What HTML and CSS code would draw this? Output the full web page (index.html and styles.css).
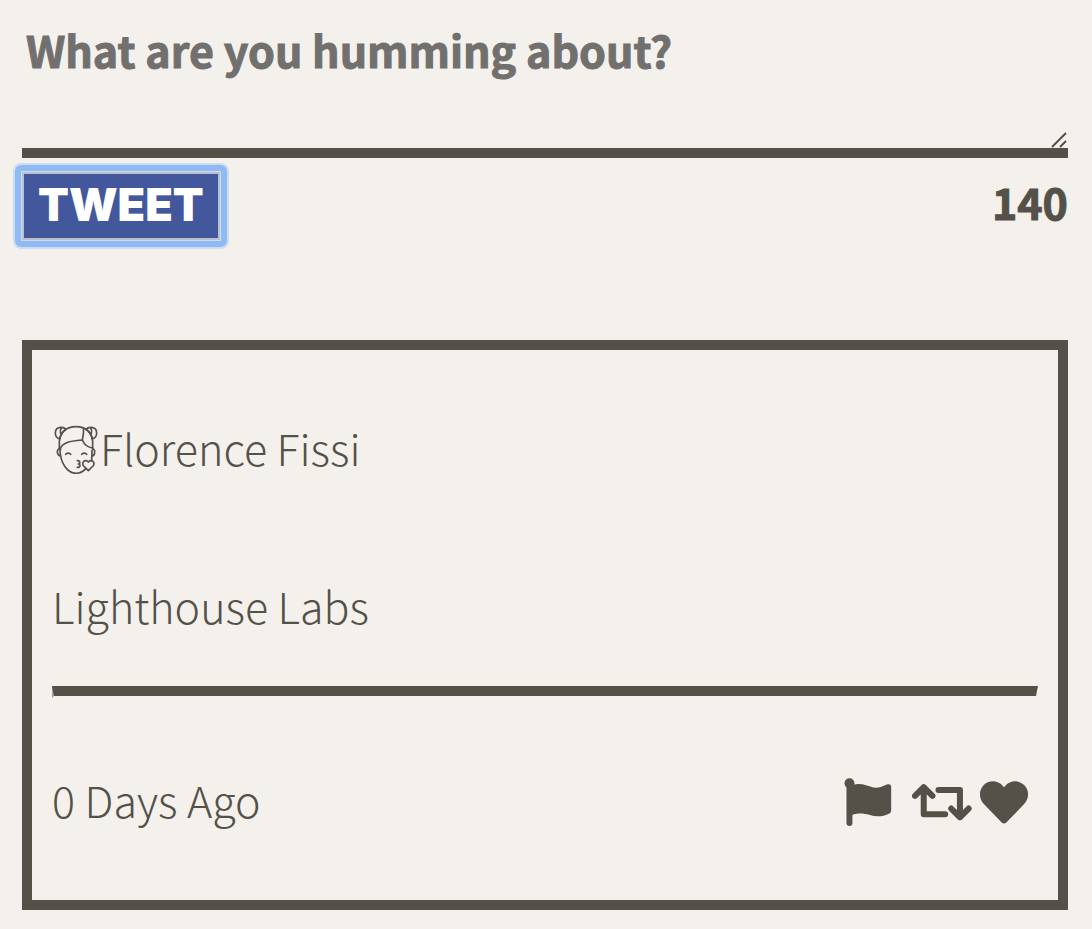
FILE: index.html
```html
<!DOCTYPE html>
<html lang="en">
<head>
<meta charset="utf-8">
<meta name="viewport" content="width=device-width, initial-scale=1">
<title>Tweeter</title>
<link rel="stylesheet" href="styles.css">
</head>
<body>
<main class="page">
  <form class="composer">
    <div class="field">
      <textarea class="message" aria-label="Tweet text" placeholder="What are you humming about?"></textarea>
      <svg class="grip" viewBox="0 0 16 16" aria-hidden="true"><path d="M1 15 15 1M9 15l6-6"/></svg>
    </div>
    <div class="actions">
      <button class="submit" type="button">TWEET</button>
      <output class="counter">140</output>
    </div>
  </form>
  <article class="tweet">
    <header class="author">
      <svg class="avatar" viewBox="42 45 132 147" aria-hidden="true">
        <path d="M58 117V94C60 66 80 50 108 50s48 16 50 44v23"/>
        <path d="M61 120c0-19 30-28 66-30 5 12 15 22 31 24"/>
        <path d="M131 54c0 12-1 24-4 36"/>
        <path d="M60 86c-10 0-14-9-14-17 0-11 7-17 17-17 7 0 12 2 15 6M60 84c3-12 9-20 18-26M65 52c-5 8-6 14-1 22"/>
        <path d="M156 86c10 0 14-9 14-17 0-11-7-17-17-17-7 0-12 2-15 6M156 84c-3-12-9-20-18-26M151 52c5 8 6 14 1 22"/>
        <path d="M58 117c-9 0-8 20 4 21M158 117c9 0 8 20-2 21"/>
        <path d="M60 121c1 38 22 69 48 69 12 0 22-6 30-15M156 121c0 9 0 15-1 28"/>
        <path d="M77 133c3-5 12-5 15 0M125 133c3-5 12-5 15 0"/>
        <path d="M112 152c9-1 10 9 3 10 8 1 6 12-3 10"/>
        <path d="M145 182 131 168c-9-10 5-23 14-12 9-11 23 2 14 12z"/>
      </svg>
      <span>Florence Fissi</span>
    </header>
    <p class="content">Lighthouse Labs</p>
    <hr class="rule">
    <footer class="meta">
      <span>0 Days Ago</span>
      <div class="tools">
        <button class="tool flag" type="button" aria-label="Report">
          <svg viewBox="45 38 142 145" aria-hidden="true"><circle cx="60" cy="54" r="15"/><path d="M51 54h18v5c26-7 42 2 63 8 16 2 28-3 43-10q11-2 11 8v71q0 6-5 9c-19 9-38 12-59 5-22-6-35-6-53-1v25a9 9 0 0 1-18 0z"/></svg>
        </button>
        <button class="tool retweet" type="button" aria-label="Retweet">
          <svg viewBox="247 54 179 113" aria-hidden="true"><path class="line" d="M256 92l26-26 26 26M282 68v79h64M326 75h64v79M364 130l26 26 26-26"/></svg>
        </button>
        <button class="tool like" type="button" aria-label="Like">
          <svg viewBox="450 47 144 128" aria-hidden="true"><path d="M515 171l-52-54c-17-17-17-42-3-57 16-17 43-17 60 3l2 2 2-2c17-20 44-20 60-3 14 15 14 40-3 57l-52 54q-7 6-14 0z"/></svg>
        </button>
      </div>
    </footer>
  </article>
</main>
</body>
</html>
```
FILE: styles.css
```css
* {
  box-sizing: border-box;
}

body {
  margin: 0;
  background: #f4f1ec;
  color: #545149;
  font: 300 43px/64px "Noto Sans CJK SC", "Open Sans", sans-serif;
}

.page {
  padding: 0 24px 19px 22px;
}

.field {
  position: relative;
  display: flex;
}

.message {
  display: block;
  width: 100%;
  height: 158px;
  padding: 17px 4px 4px;
  border: 0;
  border-bottom: 10px solid #545149;
  border-radius: 0;
  background: transparent;
  color: #545149;
  font: inherit;
  font-weight: 700;
  resize: none;
  outline: 0;
}

.message::placeholder {
  color: #72706e;
  opacity: 1;
  -webkit-text-stroke: 1px #72706e;
}

.grip {
  position: absolute;
  right: 1px;
  bottom: 10px;
  width: 16px;
  height: 16px;
  fill: none;
  stroke: #545149;
  stroke-width: 2;
}

.actions {
  display: flex;
  justify-content: space-between;
  align-items: flex-start;
  padding-top: 11px;
}

.submit {
  position: relative;
  margin-top: 3px;
  padding: 0 14px 2px;
  border: 2px solid #b9bfcb;
  border-radius: 0;
  background: #43589c;
  color: #fff;
  font: 900 45px/62px Inter, "Open Sans", sans-serif;
  outline: 0;
}

.submit::after {
  content: "";
  position: absolute;
  inset: -9px;
  border: 6px solid #90baf3;
  border-radius: 6px;
  box-shadow: 0 0 0 2px #cddcf0, inset 0 0 0 1px #cddcf0;
}

.counter {
  font-weight: 700;
  -webkit-text-stroke: 1px #545149;
}

.tweet {
  margin-top: 100px;
  padding: 65px 20px 69px;
  border: 10px solid #545149;
}

.author {
  display: flex;
  align-items: center;
}

.avatar {
  width: 44px;
  height: 49px;
  margin: 4px 2px 0;
  fill: none;
  stroke: #54514c;
  stroke-width: 5;
  stroke-linecap: round;
  stroke-linejoin: round;
}

.content {
  margin: 94px 0 49px;
}

.rule {
  height: 12px;
  margin: 0;
  border: 2px solid transparent;
  border-top: 10px solid #545149;
  border-left-color: #a5a39f;
}

.meta {
  display: flex;
  justify-content: space-between;
  align-items: center;
  padding-top: 69px;
}

.tools {
  display: flex;
  align-items: center;
  padding: 6px 10px 0 0;
}

.tool {
  display: flex;
  padding: 0;
  border: 0;
  background: none;
}

.tool svg {
  fill: #545149;
}

.flag svg {
  width: 48px;
  height: 48px;
}

.retweet {
  margin: 0 8px 0 20px;
}

.retweet svg {
  width: 60px;
  height: 38px;
}

.like svg {
  width: 48px;
  height: 43px;
}

.tool .line {
  fill: none;
  stroke: #545149;
  stroke-width: 18;
  stroke-linecap: round;
  stroke-linejoin: round;
}
```
